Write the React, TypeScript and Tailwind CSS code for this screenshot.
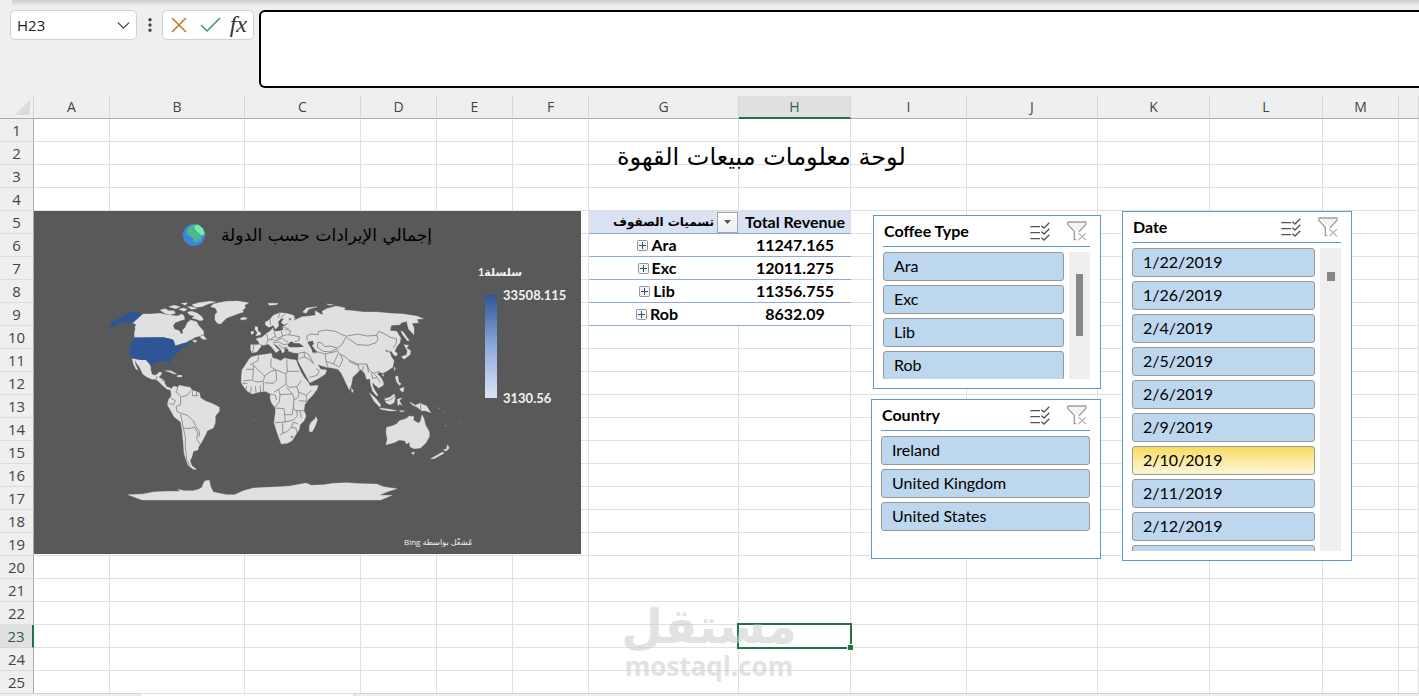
import React from 'react';
import { ChevronDown, EllipsisVertical, X } from 'lucide-react';

const COLUMNS = [
  { name: 'A', width: 76 },
  { name: 'B', width: 135 },
  { name: 'C', width: 116 },
  { name: 'D', width: 76 },
  { name: 'E', width: 76 },
  { name: 'F', width: 76 },
  { name: 'G', width: 150 },
  { name: 'H', width: 112 },
  { name: 'I', width: 116 },
  { name: 'J', width: 131 },
  { name: 'K', width: 112 },
  { name: 'L', width: 113 },
  { name: 'M', width: 76 },
  { name: '', width: 0 },
];

const ROWS = Array.from({ length: 25 }, (_, i) => i + 1);

const PIVOT: Record<number, { label: string; revenue: string }> = {
  6: { label: 'Ara', revenue: '11247.165' },
  7: { label: 'Exc', revenue: '12011.275' },
  8: { label: 'Lib', revenue: '11356.755' },
  9: { label: 'Rob', revenue: '8632.09' },
};

// the trailing empty entry is the tile that peeks out at the end of the list
const DATES = [
  '1/22/2019', '1/26/2019', '2/4/2019', '2/5/2019', '2/6/2019',
  '2/9/2019', '2/10/2019', '2/11/2019', '2/12/2019', '',
];

const FormulaBar: React.FC = () => (
  <div className="relative flex h-24 items-start pt-2.5">
    <div className="absolute top-0 right-0 left-3 h-1.5 bg-gradient-to-b from-[#cdcdcd] to-[#efefef]" />
    <div className="ml-2.5 flex h-[30px] w-[127px] items-center rounded-[5px] border border-[#d1d1d1] bg-white pr-0.5">
      <input
        aria-label="Name box"
        defaultValue="H23"
        className="w-full min-w-0 flex-1 bg-transparent pl-1.5 font-['Open_Sans',sans-serif] text-[15px] text-[#222] outline-none"
      />
      <button aria-label="Open name list" className="text-[#444]">
        <ChevronDown size={21} strokeWidth={1.5} />
      </button>
    </div>
    <div className="flex h-[30px] w-[25px] items-center justify-center text-[#444]">
      <EllipsisVertical size={18} strokeWidth={2.5} />
    </div>
    <div className="flex h-[30px] w-[92px] items-center justify-between rounded-[5px] border border-[#d1d1d1] bg-white px-[3px]">
      <button aria-label="Cancel" className="text-[#c8762b]">
        <X size={26} strokeWidth={1.5} />
      </button>
      <button aria-label="Enter">
        <svg width="22" height="18" viewBox="0 0 22 18" fill="none" stroke="#439467" strokeWidth="1.5">
          <path d="M1 9 L7 15 L20 2" />
        </svg>
      </button>
      <button aria-label="Insert function" className="pr-[3px] pb-0.5 font-['Liberation_Serif',serif] text-[24px] leading-6 text-[#333] italic">
        fx
      </button>
    </div>
    <textarea
      aria-label="Formula"
      className="ml-[5px] h-[78px] flex-1 resize-none rounded-l-md border-2 border-r-0 border-black bg-white outline-none"
    />
  </div>
);

const ExpandButton: React.FC<{ label: string }> = ({ label }) => (
  <button aria-label={`Expand ${label}`}>
    <svg width="11" height="11" viewBox="0 0 11 11" fill="none">
      <rect x="0.5" y="0.5" width="10" height="10" rx="1" fill="#f2f4f8" stroke="#8a94a6" />
      <path d="M2 5.5 H9 M5.5 2 V9" stroke="#3b4a66" />
    </svg>
  </button>
);

const GridCell: React.FC<{ row: number; column: string }> = ({ row, column }) => {
  const base = 'h-[23px] p-0 border-b';

  if (row === 5 && column === 'G') {
    return (
      <td className={`${base} border-[#8ea9db] bg-[#d9e1f2]`}>
        <div className="flex h-[22px] items-center justify-end">
          <span dir="rtl" className="pr-[3px] font-['DejaVu_Sans',sans-serif] text-[12px] leading-5 font-bold whitespace-nowrap">تسميات الصفوف</span>
          <button aria-label="Filter rows" className="mr-px flex h-[21px] w-[21px] items-center justify-center border border-[#a6a6a6] bg-gradient-to-b from-white to-[#ececec]">
            <svg width="7" height="4" viewBox="0 0 7 4"><path d="M0 0 H7 L3.5 4 Z" fill="#555" /></svg>
          </button>
        </div>
      </td>
    );
  }
  if (row === 5 && column === 'H') {
    return <td className={`${base} border-[#8ea9db] bg-[#d9e1f2] text-center text-[16px] leading-5 font-bold whitespace-nowrap`}>Total Revenue</td>;
  }
  if (PIVOT[row] && column === 'G') {
    return (
      <td className={`${base} border-[#8ea9db] text-[16px] leading-5 font-bold`}>
        <div className="flex items-center justify-center gap-[3px] pr-3.5">
          <ExpandButton label={PIVOT[row].label} />
          {PIVOT[row].label}
        </div>
      </td>
    );
  }
  if (PIVOT[row] && column === 'H') {
    return <td className={`${base} border-[#8ea9db] text-center text-[16px] leading-5 font-bold`}>{PIVOT[row].revenue}</td>;
  }
  if (row === 23 && column === 'H') {
    return (
      <td className={`${base} relative border-r border-[#e0e0e0]`}>
        <div className="absolute -inset-0.5 border-2 border-[#217346]" />
        <div className="absolute -right-[3px] -bottom-[3px] h-1.5 w-1.5 border-t border-l border-white bg-[#217346]" />
      </td>
    );
  }
  return <td className={`${base} border-r border-[#e0e0e0]`} />;
};

const SheetGrid: React.FC = () => (
  <table className="w-full table-fixed border-separate border-spacing-0 bg-white">
    <colgroup>
      <col className="w-[34px]" />
      {COLUMNS.map((col, i) => (
        <col key={i} style={col.width ? { width: col.width } : undefined} />
      ))}
    </colgroup>
    <thead>
      <tr className="bg-[#efefef] font-['Open_Sans',sans-serif] text-[14px] leading-5 text-[#444]">
        <th className="h-[23px] border-r border-b border-r-[#d5d5d5] border-b-[#ababab] p-0">
          <svg className="ml-auto mr-[3px]" width="15" height="15" viewBox="0 0 15 15"><path d="M15 0 V15 H0 Z" fill="#dcdcdc" /></svg>
        </th>
        {COLUMNS.map((col, i) => (
          <th
            key={i}
            className={
              col.name === 'H'
                ? 'h-[23px] border-r border-b-2 border-r-[#d5d5d5] border-b-[#217346] bg-[#e0e0e0] p-0 font-normal text-[#2f5f45]'
                : 'h-[23px] border-r border-b border-r-[#d5d5d5] border-b-[#ababab] p-0 font-normal'
            }
          >
            {col.name}
          </th>
        ))}
      </tr>
    </thead>
    <tbody>
      {ROWS.map((row) => (
        <tr key={row}>
          <th
            className={
              row === 23
                ? "h-[23px] border-r-2 border-b border-r-[#217346] border-b-[#d5d5d5] bg-[#e0e0e0] p-0 font-['Open_Sans',sans-serif] text-[15px] leading-5 font-normal text-[#2f5f45]"
                : "h-[23px] border-r border-b border-r-[#ababab] border-b-[#dcdcdc] bg-[#efefef] p-0 font-['Open_Sans',sans-serif] text-[15px] leading-5 font-normal text-[#444]"
            }
          >
            {row}
          </th>
          {COLUMNS.map((col, i) => (
            <GridCell key={i} row={row} column={col.name} />
          ))}
        </tr>
      ))}
    </tbody>
  </table>
);

const Globe: React.FC = () => (
  <svg width="22" height="22" viewBox="0 0 66 66">
    <circle cx="33" cy="33" r="33" fill="#3a86dc" />
    <path d="M12 16 L26 4 L44 1 L58 11 L65 26 L64 34 L56 36 L52 44 L46 46 L44 54 L36 56 L32 50 L30 42 L20 36 L12 30 Z" fill="#4fb58a" />
    <path d="M34 6 L46 2 L60 14 L65 30 L56 34 L48 28 L42 22 L36 16 Z" fill="#6ff0b0" />
    <path d="M48 44 L56 40 L54 50 L48 54 Z" fill="#4aa6f0" />
  </svg>
);

const WorldMap: React.FC = () => (
  <svg className="mt-[39px] shrink-0" width="370" height="212" viewBox="0 0 1110 636" role="img" aria-label="World map">
    <g fill="#e0e0e0" stroke="#e0e0e0" strokeWidth="1" strokeLinejoin="round">
      {/* Canada and the arctic islands */}
      <path d="M128 72 L150 72 L180 70 L200 74 L215 76 L232 78 L246 72 L252 78 L254 88 L240 92 L225 98 L219 108 L224 118 L238 122 L243 132 L249 130 L248 120 L256 112 L262 98 L272 90 L290 95 L297 108 L310 122 L312 132 L300 138 L285 142 L272 150 L260 158 L248 160 L226 166 L223 155 L218 148 L190 142 L104 142 L103 128 L106 118 L104 108 L98 100 Z" />
      <path d="M180 60 L196 56 L206 62 L222 62 L226 70 L210 74 L194 70 Z M206 50 L222 46 L240 50 L228 56 Z M236 58 L250 54 L262 58 L252 64 Z M262 66 L276 64 L292 70 L306 80 L310 90 L300 92 L290 88 L276 84 L284 78 L268 74 Z M276 44 L296 38 L330 34 L346 36 L324 42 L306 50 L286 52 Z M262 50 L276 50 L290 56 L274 58 Z M244 40 L262 38 L256 46 Z M300 140 L310 136 L320 148 L308 148 Z M278 150 L292 152 L284 158 Z" />
      <path d="M340 42 L356 38 L380 34 L412 33 L446 38 L434 46 L436 54 L428 60 L430 66 L418 70 L396 78 L380 84 L370 94 L362 102 L352 100 L345 90 L345 74 L352 66 L346 54 L332 50 Z" />
      <path d="M420 86 L430 82 L442 84 L438 88 L426 90 Z" />
      {/* Mexico, Central America, Caribbean */}
      <path d="M97 206 L124 210 L138 210 L148 222 L152 230 L152 240 L156 254 L168 256 L178 246 L186 248 L182 256 L176 262 L184 266 L192 270 L194 280 L200 290 L212 294 L212 300 L202 298 L192 290 L180 278 L168 268 L156 268 L142 262 L128 252 L120 234 L110 220 L104 210 L106 222 L114 240 L108 238 L100 222 Z" />
      <path d="M196 242 L212 242 L230 252 L222 252 L208 246 Z M232 256 L246 256 L246 260 L232 261 Z" />
      {/* South America */}
      <path d="M212 298 L222 288 L232 292 L238 286 L258 290 L270 292 L276 300 L298 308 L302 324 L318 334 L340 342 L358 352 L358 364 L346 378 L346 398 L340 414 L322 422 L316 436 L304 458 L296 470 L294 480 L280 484 L276 500 L270 512 L276 528 L290 538 L280 538 L264 526 L258 510 L252 490 L250 460 L246 420 L242 396 L222 380 L210 358 L202 344 L206 328 L214 318 Z" />
      {/* Antarctica */}
      <path d="M84 614 L130 612 L160 606 L200 604 L240 604 L234 598 L252 602 L280 602 L296 598 L306 592 L310 580 L316 572 L328 571 L332 590 L340 606 L380 614 L404 614 L430 602 L460 594 L500 592 L540 590 L570 588 L618 579 L634 586 L670 584 L700 580 L740 578 L790 581 L830 582 L850 590 L890 596 L860 606 L838 616 L876 616 L842 630 L126 630 Z" />
    </g>
    <g fill="#2f5597">
      <path d="M128 72 L110 67 L95 66 L78 72 L68 78 L60 85 L48 88 L40 92 L30 97 L36 104 L18 116 L36 112 L50 106 L60 100 L75 98 L90 97 L98 100 L104 112 L108 104 L98 98 Z" />
      <path d="M104 143 L190 142 L215 148 L222 152 L224 168 L238 166 L250 160 L262 156 L270 150 L274 156 L260 166 L248 172 L238 184 L226 194 L213 206 L210 214 L214 232 L208 226 L203 214 L190 214 L178 216 L164 218 L154 228 L146 218 L138 210 L124 210 L104 206 L94 202 L88 190 L88 176 L94 160 Z" />
    </g>
    <g transform="translate(390 0)">
      <g fill="#e0e0e0" stroke="#e0e0e0" strokeWidth="1" strokeLinejoin="round">
        {/* Africa and Madagascar */}
        <path d="M66 200 L86 196 L112 192 L124 190 L128 204 L142 208 L152 212 L164 204 L180 208 L198 210 L204 226 L214 248 L224 264 L236 278 L240 288 L264 286 L262 296 L248 316 L236 328 L224 344 L222 362 L228 378 L222 392 L210 404 L208 418 L200 430 L186 452 L172 460 L154 462 L148 446 L140 424 L132 398 L136 370 L136 354 L124 338 L120 322 L122 312 L106 304 L88 306 L66 312 L50 302 L34 280 L34 262 L36 240 L48 222 L58 206 Z" />
        <path d="M258 380 L262 390 L254 412 L246 426 L238 424 L238 408 L244 396 L254 388 Z" />
        {/* Scandinavia */}
        <path d="M106 104 L106 96 L118 90 L130 76 L150 68 L168 70 L190 76 L194 80 L184 86 L178 84 L176 98 L162 104 L154 98 L162 84 L152 86 L144 96 L146 108 L136 118 L130 106 L116 112 Z" />
        {/* Eurasia */}
        <path d="M62 164 L86 164 L88 158 L78 146 L96 142 L110 130 L120 124 L128 114 L132 124 L148 123 L160 120 L158 110 L168 106 L176 98 L176 84 L196 84 L190 92 L200 88 L216 80 L240 78 L256 76 L256 62 L272 72 L280 74 L276 64 L290 56 L318 48 L346 54 L342 60 L370 62 L400 66 L440 66 L480 70 L520 72 L560 78 L580 86 L560 88 L566 98 L546 100 L552 114 L552 134 L536 118 L532 102 L530 94 L514 98 L510 104 L484 106 L480 122 L500 124 L512 144 L510 158 L500 170 L494 184 L502 190 L500 198 L492 196 L484 184 L474 184 L470 178 L466 184 L480 188 L484 200 L492 212 L488 232 L470 244 L458 250 L448 246 L442 252 L452 262 L460 276 L460 286 L446 294 L434 284 L428 276 L428 288 L434 300 L444 316 L440 318 L428 304 L422 284 L420 266 L410 268 L404 250 L392 238 L384 246 L368 262 L364 284 L358 300 L348 280 L340 262 L334 250 L324 238 L308 234 L290 232 L270 226 L262 222 L272 238 L290 240 L286 252 L268 264 L240 278 L234 268 L222 246 L210 224 L204 212 L206 190 L190 188 L176 184 L174 176 L162 174 L164 184 L158 190 L152 178 L140 166 L128 160 L140 174 L148 180 L138 188 L124 170 L114 162 L100 166 L96 164 L88 176 L80 186 L66 188 L62 180 Z" />
        <path d="M114 40 L144 40 L140 44 L118 46 Z M218 66 L230 54 L262 50 L236 58 L228 70 Z M290 42 L310 44 L298 46 Z" />
        {/* Japan, Sakhalin, Philippines, Sri Lanka, Taiwan */}
        <path d="M514 200 L530 194 L532 182 L522 164 L536 166 L530 174 L542 182 L540 194 L522 208 Z M512 122 L520 126 L538 152 L532 152 L518 134 Z M496 260 L504 258 L506 276 L514 282 L508 286 L500 276 Z M510 296 L522 292 L520 306 L512 302 Z M364 294 L370 302 L366 308 Z M492 232 L496 234 L494 242 Z M456 254 L462 254 L460 259 Z" />
        {/* Indonesia, New Guinea */}
        <path d="M418 308 L436 324 L452 344 L450 352 L434 336 Z M450 354 L480 358 L500 362 L480 363 L452 358 Z M464 326 L480 322 L492 312 L496 322 L492 338 L480 344 L468 338 Z M502 328 L516 324 L508 332 L516 346 L508 342 L504 348 Z M540 336 L556 346 L570 340 L590 348 L602 368 L586 362 L574 362 L562 352 L546 344 Z M508 362 L524 362 L514 366 Z" />
        {/* Australia, New Zealand */}
        <path d="M470 412 L486 408 L500 402 L508 392 L528 386 L538 378 L552 380 L550 390 L566 400 L572 392 L576 374 L582 386 L586 404 L598 426 L598 440 L588 458 L572 474 L552 476 L540 470 L538 456 L530 462 L524 452 L508 450 L492 458 L468 464 L472 448 L468 426 Z M602 506 L638 486 L642 490 L612 506 Z M640 480 L650 476 L652 464 L658 474 L648 484 Z M544 488 L554 486 L550 494 Z" />
      </g>
      {/* Pacific and Atlantic specks */}
      <path fill="#8c8c8c" d="M612 348 h4 v2 h-4 Z M624 354 h5 v2 h-5 Z M640 366 h3 v3 h-3 Z M646 404 h3 v6 h-3 Z M690 398 h6 v2 h-6 Z M70 389 h3 v3 h-3 Z M296 518 h3 v2 h-3 Z" />
      <path fill="#d3e3f0" d="M76 108 L84 112 L84 122 L94 130 L90 136 L76 138 L82 128 L74 118 Z M62 126 L70 122 L72 130 L64 134 Z" />
      {/* Black Sea and Caspian */}
      <path fill="#595959" d="M172 164 L184 154 L192 160 L208 160 L222 170 L204 172 L178 172 Z M232 156 L248 152 L252 162 L246 166 L254 178 L262 186 L248 188 L244 176 Z M176 84 L184 86 L180 92 Z" />
      <g fill="none" stroke="#6a6a6a" strokeWidth="2" strokeLinejoin="round">
        <path d="M110 132 L114 152 L108 162 M132 124 L136 138 L122 148 L114 150 M154 124 L158 138 L142 146 L136 138 M158 138 L172 134 L188 136 L208 140 L208 150 L192 156 M166 118 L182 122 L178 134 M160 112 L176 116 M122 148 L140 152 L154 144 L164 150 L176 158 M130 158 L148 156 L160 164 L172 162 M146 164 L158 174 L172 172 M72 164 L68 186 M88 162 L100 168 M120 88 L122 104 M150 70 L144 84 M152 82 L166 72" />
        <path d="M232 152 L230 138 L242 132 L264 134 L266 124 L290 120 L316 124 L336 134 L350 138 L342 152 L336 164 L322 174 L300 168 L284 170 L276 160 L264 156 L262 172 M352 138 L384 132 L410 138 L440 136 L444 148 L438 158 L414 166 L382 164 L352 144 M440 136 L446 124 L462 130 L480 142 L500 146 L498 162 L488 174 M262 172 L280 184 L302 186 L320 176 L326 190 L346 200 L356 210 L384 222 L410 222 L418 240 L430 250 L448 244 M250 190 L264 186 L286 192 L288 214 L310 222 L324 192 M286 192 L302 188 L320 184 M288 214 L294 232 M310 222 L326 230 M332 194 L338 210 L328 232 M356 214 L384 226 M384 222 L388 242 M400 228 L398 244 M410 222 L416 248 M424 248 L428 266 L440 262 L452 278 M430 250 L442 262 M206 190 L224 186 L236 194 L246 212 L252 222 M208 206 L222 200 L240 210 L248 220 M222 186 L224 200 M238 262 L262 256 L268 242 L258 236" />
        <path d="M124 206 L122 230 L138 240 M86 198 L84 212 L60 224 M48 238 L70 238 L70 222 M70 226 L104 258 L122 244 L138 240 L140 270 L130 280 L104 278 M104 258 L100 274 L78 276 L66 270 L40 272 M70 238 L68 268 M170 208 L172 244 L208 244 M172 244 L168 252 L140 240 M168 252 L168 282 L146 298 L132 306 M168 284 L178 292 L200 290 L214 272 M200 290 L206 306 L228 316 L244 302 M206 306 L206 320 L192 330 L190 316 L170 292 M146 298 L150 314 L188 312 M150 314 L148 336 L134 352 M192 330 L190 352 L196 362 L222 362 M190 352 L186 374 L164 374 L162 356 L136 354 M164 374 L166 396 L134 398 M166 396 L190 390 L202 378 L200 362 M158 400 L158 430 L150 436 M158 430 L172 424 L184 412 L190 396 L204 402 M184 412 L198 414 L200 428 M76 288 L78 308 M90 286 L92 306 M100 276 L100 304 M64 290 L62 310 M50 288 L48 300 M36 280 L52 280 M122 312 L136 316 L140 330 M182 440 L188 438 L186 444 Z M230 316 L230 334 L208 332 M210 364 L214 384" />
        <path d="M572 342 L572 362 M466 332 L480 330 L494 320" />
      </g>
    </g>
    <g fill="none" stroke="#6a6a6a" strokeWidth="2" strokeLinejoin="round">
      <path d="M234 290 L228 306 L242 318 L242 344 L228 350 L232 366 L244 370 L262 376 L280 392 L286 408 L298 424 L298 440 M246 320 L262 316 L270 304 M276 298 L278 318 L296 316 M206 340 L220 344 L226 332 L212 324 M242 372 L250 414 L264 416 L284 412 M250 414 L256 440 L256 470 L260 510 L270 528 M284 412 L294 430 L290 446 L300 462 M290 306 L288 320 M168 268 L172 258 M184 272 L192 270" />
    </g>
  </svg>
);

const MapChart: React.FC = () => (
  <section className="absolute top-[115px] left-[34px] flex h-[343px] w-[547px] flex-col bg-[#595959] text-[#f2f2f2]">
    <header className="flex h-10 items-center justify-center gap-4 pt-2">
      <Globe />
      <h2 dir="rtl" className="font-['DejaVu_Sans',sans-serif] text-[17px] leading-6 whitespace-nowrap text-black">إجمالي الإيرادات حسب الدولة</h2>
    </header>
    <div className="flex flex-1 items-start pl-[66px]">
      <WorldMap />
      <div className="pt-3 pl-2.5">
        <p dir="rtl" className="w-[42px] font-['Lato','DejaVu_Sans',sans-serif] text-[11px] leading-[18px] font-bold whitespace-nowrap">سلسلة1</p>
        <div className="mt-3.5 ml-[5px] flex gap-1.5">
          <div className="h-[103px] w-3 bg-gradient-to-b from-[#2f5597] via-[#8faadc] to-[#dae3f3]" />
          <div className="-my-2 flex flex-col justify-between text-[13px] leading-4 font-bold">
            <span>33508.115</span>
            <span>3130.56</span>
          </div>
        </div>
      </div>
    </div>
    <p dir="rtl" className="mr-auto ml-[370px] pb-1 font-['Open_Sans','DejaVu_Sans',sans-serif] text-[8px] leading-4 whitespace-nowrap">مُشغّل بواسطة Bing</p>
  </section>
);

const MultiSelectIcon: React.FC = () => (
  <svg width="20" height="19" viewBox="0 0 60 57" fill="none" stroke="#555" strokeWidth="4">
    <path d="M1 14 H30 M1 32 H30 M1 50 H30" />
    <path d="M34 11 L42 18 L58 2 M34 29 L42 36 L58 20 M34 47 L42 54 L58 38" />
  </svg>
);

const ClearFilterIcon: React.FC = () => (
  <svg width="20" height="20" viewBox="0 0 60 60" fill="none">
    <path d="M2 3 H57 V10 L36 32 M2 3 V10 L22 31 V56 H28" fill="#f3f3f3" stroke="#a0a0a0" strokeWidth="4" />
    <path d="M34 36 L57 58 M57 36 L34 58" stroke="#bdbdbd" strokeWidth="4" />
  </svg>
);

interface SlicerProps {
  title: string;
  items: string[];
  highlighted?: string;
  className: string;
  thumbClass?: string;
}

const Slicer: React.FC<SlicerProps> = ({ title, items, highlighted, className, thumbClass }) => (
  <section className={`absolute flex flex-col border border-[#5b9bd5] bg-white pr-2.5 pb-[9px] pl-[9px] ${className}`}>
    <header className="flex h-[31px] shrink-0 items-center border-b border-[#5b9bd5] pr-[3px] pl-px">
      <h3 className="flex-1 text-[16px] leading-5 font-bold">{title}</h3>
      <button aria-label={`Multi-select ${title}`} className="mr-[17px]">
        <MultiSelectIcon />
      </button>
      <button aria-label={`Clear filter ${title}`}>
        <ClearFilterIcon />
      </button>
    </header>
    <div className="mt-[5px] flex min-h-0 flex-1 gap-[5px]">
      <div className="flex flex-1 flex-col gap-1 overflow-hidden">
        {items.map((item) => (
          <button
            key={item}
            aria-label={item || 'Next value'}
            aria-pressed={item !== highlighted}
            className={
              item === highlighted
                ? 'h-[29px] shrink-0 rounded-[3px] border border-[#999] bg-gradient-to-b from-[#f8dc5a] to-[#fdf6d8] px-2.5 pb-0.5 text-left text-[16px] leading-5'
                : 'h-[29px] shrink-0 rounded-[3px] border border-[#999] bg-[#bdd7ee] px-2.5 pb-0.5 text-left text-[16px] leading-5'
            }
          >
            {item}
          </button>
        ))}
      </div>
      {thumbClass && (
        <div className="w-[21px] bg-[#efefef]">
          <div className={`mx-auto bg-[#868686] ${thumbClass}`} />
        </div>
      )}
    </div>
  </section>
);

const Watermark: React.FC = () => (
  <div className="pointer-events-none absolute top-[502px] left-[622px] flex w-[174px] flex-col items-center text-[#cfcfcf] opacity-60">
    <span dir="rtl" className="font-['DejaVu_Sans',sans-serif] text-[48px] leading-[56px] font-bold">مستقل</span>
    <span className="font-['Open_Sans',sans-serif] text-[26px] leading-6 font-bold">mostaql.com</span>
  </div>
);

const App: React.FC = () => (
  <div className="min-h-screen overflow-hidden bg-[#efefef] font-['Lato','DejaVu_Sans',sans-serif] text-black">
    <FormulaBar />
    <main className="relative">
      <SheetGrid />
      <h1 dir="rtl" className="absolute top-[41px] left-[617px] font-['DejaVu_Sans',sans-serif] text-[24px] leading-[40px] whitespace-nowrap">لوحة معلومات مبيعات القهوة</h1>
      <MapChart />
      <Slicer title="Coffee Type" items={['Ara', 'Exc', 'Lib', 'Rob']} className="top-[119px] left-[873px] h-[174px] w-[228px]" thumbClass="mt-[22px] h-[62px] w-[7px]" />
      <Slicer title="Country" items={['Ireland', 'United Kingdom', 'United States']} className="top-[303px] left-[871px] h-[160px] w-[230px]" />
      <Slicer title="Date" items={DATES} highlighted="2/10/2019" className="top-[115px] left-[1122px] h-[350px] w-[230px]" thumbClass="mt-6 h-[9px] w-2" />
      <Watermark />
    </main>
    <footer className="-mt-px flex h-1">
      <div className="relative w-[141px] rounded-tr border-t border-r border-[#d5d5d5] bg-[#efefef]" />
      <div className="w-[212px] bg-white" />
      <div className="relative flex-1 rounded-tl border-t border-l border-[#d5d5d5] bg-[#efefef]" />
    </footer>
  </div>
);

export default App;
